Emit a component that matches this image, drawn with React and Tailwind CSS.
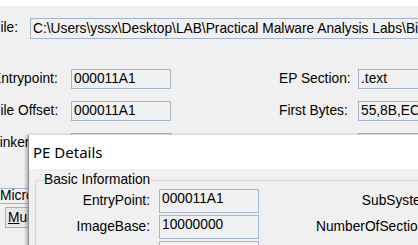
import React from 'react';

const field = 'shrink-0 border border-[#a3b6cd] bg-[#f0f0f0] px-[2px] whitespace-nowrap overflow-hidden';

function MainRow({ label, value, rightLabel, rightValue }) {
  return (
    <div className="flex items-center h-[20px]">
      <span className="w-[79px] shrink-0">{label}</span>
      <div className={`${field} w-[100px] h-[20px] leading-[18px]`}>{value}</div>
      <span className="w-[108px] shrink-0" />
      <span className="w-[79px] shrink-0">{rightLabel}</span>
      <div className={`${field} w-[120px] h-[20px] leading-[18px]`}>{rightValue}</div>
    </div>
  );
}

function DetailRow({ label, value, rightLabel }) {
  return (
    <div className="flex h-[24px]">
      <span className="w-[114px] shrink-0 text-right leading-[24px]">{label}</span>
      <span className="w-[9px] shrink-0" />
      <div className={`${field} w-[100px] h-[24px] leading-[16px] pt-[1px]`}>{value}</div>
      <span className="w-[177px] shrink-0 text-right leading-[24px]">{rightLabel}</span>
    </div>
  );
}

export default function App() {
  return (
    <div
      className="relative w-[418px] h-[245px] overflow-hidden bg-[#f0f0f0] text-black text-[13.75px]"
      style={{ fontFamily: '"Liberation Sans", Arial, sans-serif' }}
    >
      {/* main window behind */}
      <div className="h-[6px] bg-white" />
      <div className="ml-[-8px] w-[700px] pt-[12px]">
        <div className="flex items-center h-[21px]">
          <span className="w-[38px] shrink-0">File:</span>
          <div className={`${field} w-[500px] h-[21px] leading-[19px]`}>
            C:\Users\yssx\Desktop\LAB\Practical Malware Analysis Labs\BinaryCollection\Chapter_1L\Lab01-02.exe
          </div>
        </div>
        <div className="flex flex-col gap-[12px] mt-[30px]">
          <MainRow label="Entrypoint:" value="000011A1" rightLabel="EP Section:" rightValue=".text" />
          <MainRow label="File Offset:" value="000011A1" rightLabel="First Bytes:" rightValue="55,8B,EC,6A" />
          <MainRow label="Linker Info:" value="6.0" rightLabel="Subsystem:" rightValue="Win32 GUI" />
        </div>
        <div className={`${field} mt-[35px] w-[260px] h-[16px] leading-[14px] pl-[8px] border-x-0`}>
          Microsoft Visual C++ 6.0
        </div>
        <div className="mt-[3px] ml-[13px] w-[80px] h-[21px] border border-[#adadad] bg-[#e8e8e8] leading-[19px] pl-[2px]">
          <span className="underline">M</span>ulti Scan
        </div>
      </div>

      {/* PE Details dialog */}
      <div className="absolute left-[28px] top-[135px] w-[420px] h-[140px] bg-[#f0f0f0] border-l border-[#8c8c8c] shadow-[-2px_0_3px_rgba(0,0,0,0.25)]">
        <div
          className="h-[34px] bg-white flex items-center pl-[4px] text-[15px]"
          style={{ fontFamily: '"Noto Sans", "Open Sans", sans-serif' }}
        >
          PE Details
        </div>
        <div className="pt-[3px] pl-[6px]">
          <fieldset className="border border-[#d5d5d5] rounded-[2px] w-[440px] h-[120px]">
            <legend className="ml-[7px] px-[1px] leading-[16px]">Basic Information</legend>
            <div className="flex flex-col gap-[2px] mt-[1px]">
              <DetailRow label="EntryPoint:" value="000011A1" rightLabel="SubSystem:" />
              <DetailRow label="ImageBase:" value="10000000" rightLabel="NumberOfSections:" />
              <DetailRow label="SizeOfImage:" value="00005000" rightLabel="TimeDateStamp:" />
            </div>
          </fieldset>
        </div>
      </div>
    </div>
  );
}
